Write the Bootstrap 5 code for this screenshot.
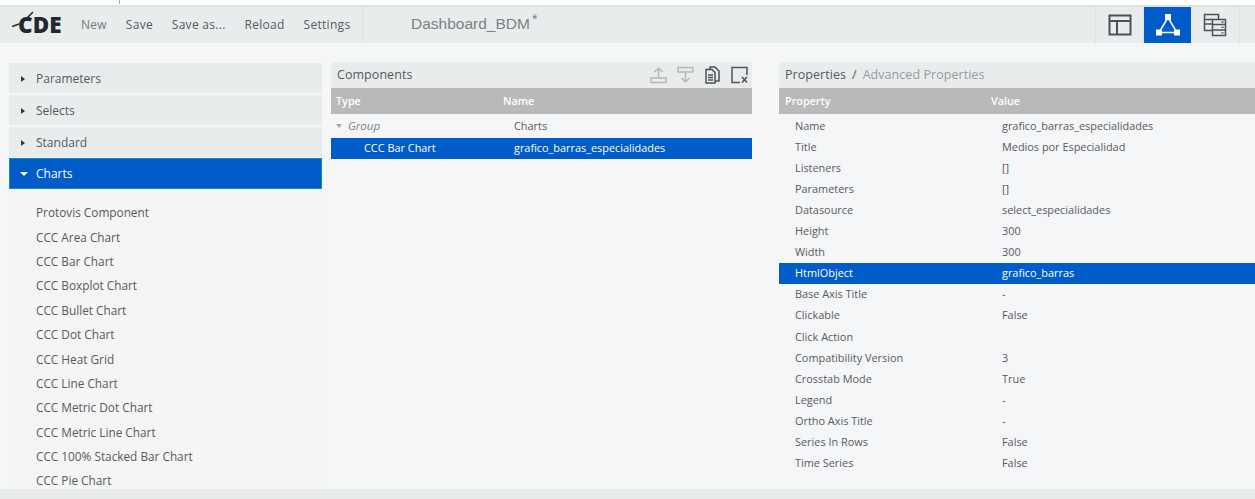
<!DOCTYPE html>
<html lang="en">
<head>
  <meta charset="UTF-8">
  <meta name="viewport" content="width=device-width, initial-scale=1.0">
  <title>CDE - Dashboard_BDM</title>
  <link rel="stylesheet" href="https://cdn.jsdelivr.net/npm/bootstrap@5.3.0/dist/css/bootstrap.min.css">
  <style>
    html, body { height: 100%; }
    body {
      background: #f5f6f8;
      font-family: "Open Sans", "Liberation Sans", sans-serif;
      font-size: 10.9px;
      color: #555a60;
      overflow: hidden;
    }
    .page-wrap { height: 499px; }
    .top-strip { height: 5px; background: #fff; padding-left: 119px; }
    .top-strip span { display: block; width: 1px; height: 4px; background: #aaa; }
    .top-shadow { height: 2px; background: #dfe1e1; }
    .cde-bar { height: 36px; background: #e9ecec; }
    .cde-logo {
      width: 81px; padding-left: 18px;
      font-weight: 800; font-size: 22.5px; letter-spacing: .1px; color: #24292e;
      position: relative; line-height: 36px;
    }
    .logo-tick { position: absolute; left: 12px; top: 4px; }
    .cde-menu { gap: 18.8px; letter-spacing: .3px; font-size: 12px; color: #555a60; width: 281px; }
    .cde-menu a { color: inherit; text-decoration: none; }
    .cde-menu a.first-item { color: #74797e; }
    .dash-title {
      border-left: 1px solid #dfe1e1; padding-left: 48px; height: 36px; line-height: 33px;
      font-size: 15.5px; color: #7d8185; font-family: "Liberation Sans", sans-serif;
    }
    .dash-title sup { font-size: 14px; top: -.35em; margin-left: 2px; }
    .view-tabs { margin-right: 15px; border-left: 1px solid #dfe1e1; border-right: 1px solid #dfe1e1; }
    .view-tab { width: 47px; height: 36px; }
    .view-tab.is-on { background: #005cc8; }
    .view-tab:first-child { width: 48px; border-right: 1px solid #dfe1e1; }
    .view-tab:last-child { width: 48px; }
    .work-area { flex: 1; min-height: 0; padding: 20px 0 0 9px; gap: 9px; overflow: hidden; }
    .left-col { width: 313px; }
    .mid-col { width: 421px; margin-right: 18px; margin-top: -1px; }
    .right-col { flex: 1; margin-top: -1px; }
    .acc-head {
      flex: none; height: 30px; margin-bottom: 2px; background: #e9ecec; padding: 1px 0 0 12px;
      font-size: 12px;
    }
    .acc-head.is-open { height: 31px; background: #005cc8; color: #fff; border: 1px solid #0a8fb5; margin-top: -1px; padding: 0 0 0 10px; margin-bottom: 0; }
    .tri { width: 15px; flex: none; }
    .is-open .tri { width: 16px; }
    .tri-r { display: block; width: 0; height: 0; border-left: 4px solid #33383d; border-top: 3.5px solid transparent; border-bottom: 3.5px solid transparent; }
    .tri-d { display: block; width: 0; height: 0; border-top: 4px solid #fff; border-left: 4px solid transparent; border-right: 4px solid transparent; }
    .acc-list { padding: 11.4px 0 0 27px; font-size: 11.8px; background: #f5f5f6; flex: 1; }
    .acc-list div { height: 24.36px; line-height: 24.36px; white-space: nowrap; }
    .panel-title { height: 26px; background: #e9ecec; padding-left: 6px; font-size: 12.5px; letter-spacing: .05px; color: #555a60; }
    .panel-title .muted-part { color: #969a9e; }
    .panel-title .sep { margin: 0 6px; }
    .tool-icons { gap: 7px; margin-right: 2px; }
    .grid-head { height: 26px; background: #b9b9b9; color: #fff; font-weight: 600; font-size: 10.8px; padding-left: 5px; }
    .mid-col .col-type { width: 167px; flex: none; }
    .right-col .grid-head { padding-left: 6px; }
    .right-col .col-type { width: 206px; flex: none; }
    .comp-row { height: 23px; padding-left: 5px; }
    .comp-row.group-row { height: 24px; }
    .comp-row.sel { height: 21px; background: #005cc8; color: #fff; }
    .group-label { font-style: italic; font-size: 11.5px; color: #7d8185; width: 178px; flex: none; padding-left: 12px; position: relative; }
    .group-label i { position: absolute; left: 0; top: 7px; border-top: 4px solid #a5a8ab; border-left: 3.5px solid transparent; border-right: 3.5px solid transparent; }
    .sel-label { width: 178px; flex: none; padding-left: 28px; }
    .prop-row { height: 21.06px; padding-left: 16px; }
    .prop-row .prop-name { width: 207px; flex: none; }
    .prop-row.sel { background: #005cc8; color: #fff; }
    .prop-list { padding-top: 1.7px; }
    .bottom-bar { height: 10px; background: #e9ecec; flex: none; }
  </style>
</head>
<body>
  <div class="page-wrap d-flex flex-column">
    <div class="top-strip"><span></span></div>
    <div class="top-shadow"></div>

    <div class="cde-bar d-flex align-items-center">
      <div class="cde-logo">
        <svg class="logo-tick" width="22" height="18" viewBox="0 0 22 18"><path d="M0 15.500 7 13M14 8l7-7" stroke="#24292e" stroke-width="1.500" fill="none"/></svg>
        CDE
      </div>
      <nav class="cde-menu d-flex align-items-center">
        <a href="#" class="first-item">New</a>
        <a href="#">Save</a>
        <a href="#">Save as...</a>
        <a href="#">Reload</a>
        <a href="#">Settings</a>
      </nav>
      <div class="dash-title">Dashboard_BDM<sup>*</sup></div>
      <div class="view-tabs d-flex ms-auto">
        <div class="view-tab d-flex align-items-center justify-content-center">
          <svg width="24" height="22" viewBox="0 0 24 22" fill="none" stroke="#4b5157" stroke-width="2"><rect x="1.500" y="1.500" width="21" height="19"/><path d="M1.500 7h21M9 7v13.500"/></svg>
        </div>
        <div class="view-tab is-on d-flex align-items-center justify-content-center">
          <svg width="26" height="24" viewBox="0 0 26 24"><path d="M13 4.500 4 19.500h18z" fill="none" stroke="#fff" stroke-width="1.500"/><rect x="10" y="1" width="6" height="6" fill="#fff"/><rect x="1" y="16.500" width="6" height="6" fill="#fff"/><rect x="19" y="16.500" width="6" height="6" fill="#fff"/></svg>
        </div>
        <div class="view-tab d-flex align-items-center justify-content-center">
          <svg width="24" height="24" viewBox="0 0 24 24" fill="none" stroke="#4b5157" stroke-width="1.500"><path d="M9 17.500H1.500V1.500h14V6M1.500 6.500H9M1.500 11H9"/><rect x="9.500" y="6.500" width="13" height="16" fill="#e9ecec"/><path d="M9.500 11.500h13M9.500 17h13"/><path d="M18.500 9h2M18.500 14.300h2M18.500 19.800h2" stroke-width="1.300"/></svg>
        </div>
      </div>
    </div>

    <div class="work-area d-flex">
      <div class="left-col d-flex flex-column">
        <div class="acc-head d-flex align-items-center"><span class="tri"><i class="tri-r"></i></span>Parameters</div>
        <div class="acc-head d-flex align-items-center"><span class="tri"><i class="tri-r"></i></span>Selects</div>
        <div class="acc-head d-flex align-items-center"><span class="tri"><i class="tri-r"></i></span>Standard</div>
        <div class="acc-head is-open d-flex align-items-center"><span class="tri"><i class="tri-d"></i></span>Charts</div>
        <div class="acc-list">
          <div>Protovis Component</div>
          <div>CCC Area Chart</div>
          <div>CCC Bar Chart</div>
          <div>CCC Boxplot Chart</div>
          <div>CCC Bullet Chart</div>
          <div>CCC Dot Chart</div>
          <div>CCC Heat Grid</div>
          <div>CCC Line Chart</div>
          <div>CCC Metric Dot Chart</div>
          <div>CCC Metric Line Chart</div>
          <div>CCC 100% Stacked Bar Chart</div>
          <div>CCC Pie Chart</div>
        </div>
      </div>

      <div class="mid-col">
        <div class="panel-title d-flex align-items-center">
          <span>Components</span>
          <div class="tool-icons d-flex align-items-center ms-auto">
            <svg width="20" height="18" viewBox="0 0 20 18" fill="none" stroke="#b4b6b8" stroke-width="1.500"><rect x="2" y="12" width="15" height="4.500"/><path d="M9.500 12V2M5.500 6l4-4 4 4"/></svg>
            <svg width="20" height="18" viewBox="0 0 20 18" fill="none" stroke="#b4b6b8" stroke-width="1.500"><rect x="2" y="1.500" width="15" height="4.500"/><path d="M9.500 6v10M5.500 12l4 4 4-4"/></svg>
            <svg width="20" height="18" viewBox="0 0 20 18" fill="none" stroke="#4b5157" stroke-width="1.500"><path d="M3 3.500h6l3 3v10.500H3z"/><path d="M7 3.500V1h5l4 4v10h-4M5 9h5M5 11.500h5M5 14h5"/></svg>
            <svg width="20" height="18" viewBox="0 0 20 18" fill="none" stroke="#4b5157" stroke-width="1.500"><path d="M17 9V1.500H2v15h8"/><path d="M12 11l5 5.500M17 11l-5 5.500"/></svg>
          </div>
        </div>
        <div class="grid-head d-flex align-items-center"><span class="col-type">Type</span><span>Name</span></div>
        <div class="comp-row group-row d-flex align-items-center"><span class="group-label"><i></i>Group</span><span>Charts</span></div>
        <div class="comp-row sel d-flex align-items-center"><span class="sel-label">CCC Bar Chart</span><span>grafico_barras_especialidades</span></div>
      </div>

      <div class="right-col">
        <div class="panel-title d-flex align-items-center"><span>Properties</span><span class="sep">/</span><span class="muted-part">Advanced Properties</span></div>
        <div class="grid-head d-flex align-items-center"><span class="col-type">Property</span><span>Value</span></div>
        <div class="prop-list">
          <div class="prop-row d-flex align-items-center"><span class="prop-name">Name</span><span>grafico_barras_especialidades</span></div>
          <div class="prop-row d-flex align-items-center"><span class="prop-name">Title</span><span>Medios por Especialidad</span></div>
          <div class="prop-row d-flex align-items-center"><span class="prop-name">Listeners</span><span>[]</span></div>
          <div class="prop-row d-flex align-items-center"><span class="prop-name">Parameters</span><span>[]</span></div>
          <div class="prop-row d-flex align-items-center"><span class="prop-name">Datasource</span><span>select_especialidades</span></div>
          <div class="prop-row d-flex align-items-center"><span class="prop-name">Height</span><span>300</span></div>
          <div class="prop-row d-flex align-items-center"><span class="prop-name">Width</span><span>300</span></div>
          <div class="prop-row sel d-flex align-items-center"><span class="prop-name">HtmlObject</span><span>grafico_barras</span></div>
          <div class="prop-row d-flex align-items-center"><span class="prop-name">Base Axis Title</span><span>-</span></div>
          <div class="prop-row d-flex align-items-center"><span class="prop-name">Clickable</span><span>False</span></div>
          <div class="prop-row d-flex align-items-center"><span class="prop-name">Click Action</span><span></span></div>
          <div class="prop-row d-flex align-items-center"><span class="prop-name">Compatibility Version</span><span>3</span></div>
          <div class="prop-row d-flex align-items-center"><span class="prop-name">Crosstab Mode</span><span>True</span></div>
          <div class="prop-row d-flex align-items-center"><span class="prop-name">Legend</span><span>-</span></div>
          <div class="prop-row d-flex align-items-center"><span class="prop-name">Ortho Axis Title</span><span>-</span></div>
          <div class="prop-row d-flex align-items-center"><span class="prop-name">Series In Rows</span><span>False</span></div>
          <div class="prop-row d-flex align-items-center"><span class="prop-name">Time Series</span><span>False</span></div>
        </div>
      </div>
    </div>

    <div class="bottom-bar"></div>
  </div>

  <script src="https://cdn.jsdelivr.net/npm/bootstrap@5.3.0/dist/js/bootstrap.bundle.min.js"></script>
</body>
</html>
